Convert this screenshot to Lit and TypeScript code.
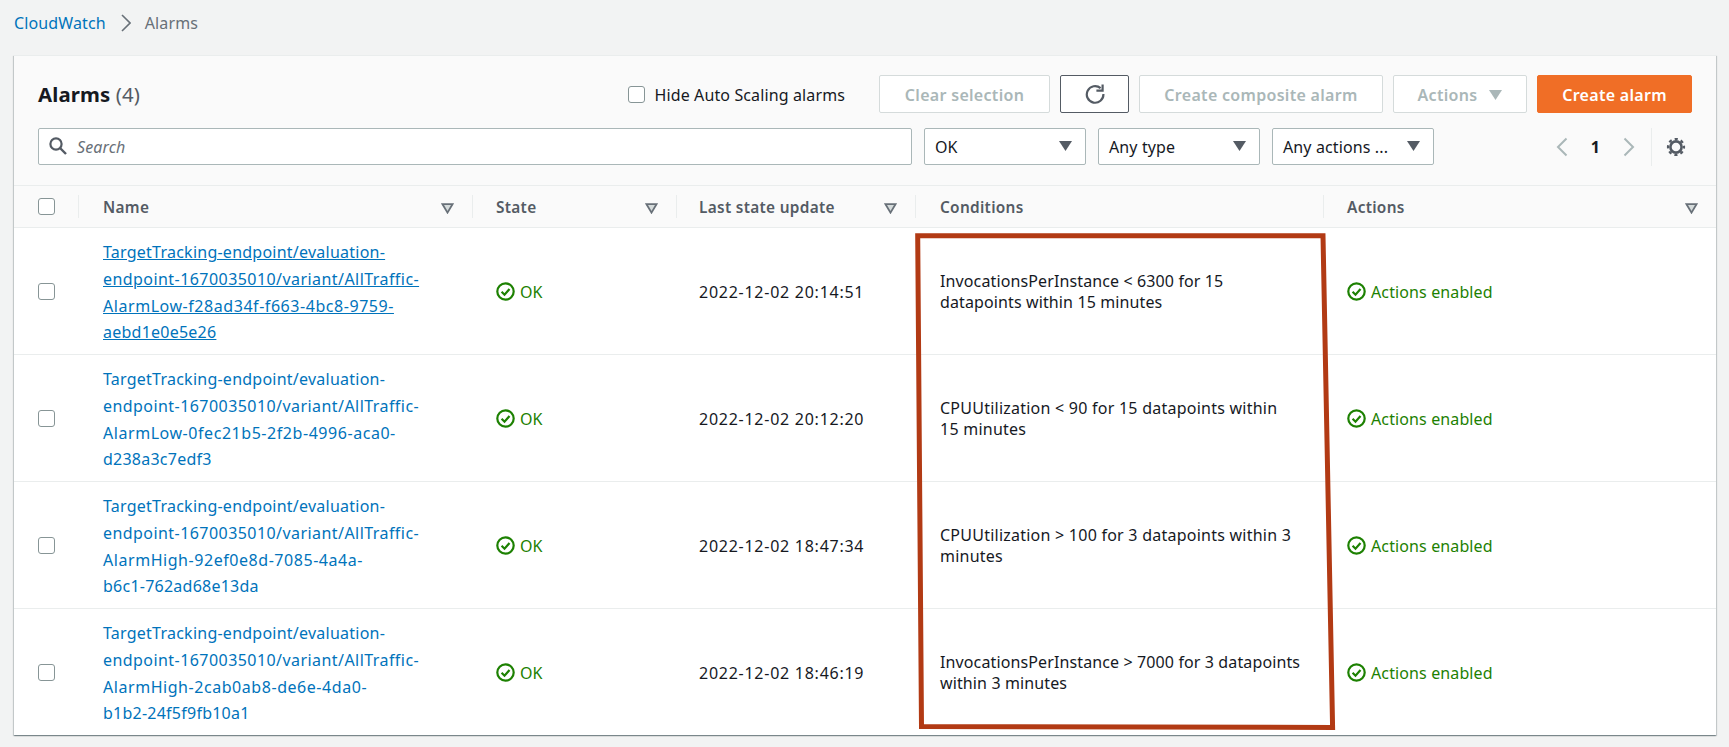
import { LitElement, html, css, svg } from 'lit';
import { customElement } from 'lit/decorators.js';

const rows = [
  {
    name: ['TargetTracking-endpoint/evaluation-', 'endpoint-1670035010/variant/AllTraffic-', 'AlarmLow-f28ad34f-f663-4bc8-9759-', 'aebd1e0e5e26'],
    updated: '2022-12-02 20:14:51',
    cond: ['InvocationsPerInstance < 6300 for 15', 'datapoints within 15 minutes'],
    hover: true,
  },
  {
    name: ['TargetTracking-endpoint/evaluation-', 'endpoint-1670035010/variant/AllTraffic-', 'AlarmLow-0fec21b5-2f2b-4996-aca0-', 'd238a3c7edf3'],
    updated: '2022-12-02 20:12:20',
    cond: ['CPUUtilization < 90 for 15 datapoints within', '15 minutes'],
    wide: true,
  },
  {
    name: ['TargetTracking-endpoint/evaluation-', 'endpoint-1670035010/variant/AllTraffic-', 'AlarmHigh-92ef0e8d-7085-4a4a-', 'b6c1-762ad68e13da'],
    updated: '2022-12-02 18:47:34',
    cond: ['CPUUtilization > 100 for 3 datapoints within 3', 'minutes'],
    wide: true,
  },
  {
    name: ['TargetTracking-endpoint/evaluation-', 'endpoint-1670035010/variant/AllTraffic-', 'AlarmHigh-2cab0ab8-de6e-4da0-', 'b1b2-24f5f9fb10a1'],
    updated: '2022-12-02 18:46:19',
    cond: ['InvocationsPerInstance > 7000 for 3 datapoints', 'within 3 minutes'],
  },
];

const okIcon = svg`<svg class="ok-icon" viewBox="0 0 19 19" width="19" height="19">
  <circle cx="9.5" cy="9.5" r="8.2" fill="none" stroke="#1d8102" stroke-width="2.2"/>
  <path d="M5.6 9.8l2.9 2.9 5-5.6" fill="none" stroke="#1d8102" stroke-width="2.2"/>
</svg>`;

const sortIcon = svg`<svg class="sort" viewBox="0 0 13 11" width="13" height="11">
  <path d="M1.5 1.2h10L6.5 9.6z" fill="#d5dbdb" stroke="#687078" stroke-width="1.8"/>
</svg>`;

const caret = (color: string) => svg`<svg viewBox="0 0 13 10" width="13" height="10">
  <path d="M0 0h13L6.5 10z" fill="${color}"/>
</svg>`;

@customElement('app-root')
export class AppRoot extends LitElement {
  static styles = css`
    :host {
      display: block;
      position: relative;
      height: 747px;
      overflow: hidden;
      background: #f2f3f3;
      color: #16191f;
      font-family: 'Noto Sans', sans-serif;
      font-size: 16px;
      letter-spacing: 0.12px;
    }
    .crumbs {
      display: flex;
      align-items: center;
      height: 46px;
      padding-left: 14px;
      color: #687078;
    }
    .crumbs a { color: #0073bb; }
    .crumbs svg { margin: 0 14px 0 15px; }
    .card {
      margin: 9px 13px 0 14px;
      background: #fff;
      box-shadow: 0 1px 1px 0 rgba(0, 28, 36, 0.3), 1px 1px 1px 0 rgba(0, 28, 36, 0.15), -1px 1px 1px 0 rgba(0, 28, 36, 0.15);
      border-top: 1px solid #eaeded;
    }
    .toolbar {
      background: #fafafa;
      padding: 19px 24px 20px;
      display: flex;
      flex-direction: column;
      gap: 15px;
      border-bottom: 1px solid #eaeded;
    }
    .title-row, .filter-row { display: flex; align-items: center; }
    .title-row { height: 38px; }
    .filter-row { height: 37px; }
    h1 {
      margin: 0;
      font-size: 20.4px;
      font-weight: 700;
      line-height: 38px;
    }
    h1 span { font-weight: 400; color: #545b64; }
    .hide-scaling {
      display: flex;
      align-items: center;
      gap: 9px;
      margin-left: auto;
      margin-right: 34px;
      padding-top: 1px;
    }
    .box {
      display: block;
      box-sizing: border-box;
      width: 17px;
      height: 17px;
      background: #fff;
      border: 1.5px solid #879596;
      border-radius: 3px;
    }
    .buttons { display: flex; gap: 10px; }
    .btn {
      box-sizing: border-box;
      height: 38px;
      display: flex;
      align-items: center;
      justify-content: center;
      gap: 12px;
      padding-top: 1px;
      background: #fff;
      border: 1px solid #d5dbdb;
      border-radius: 2px;
      color: #aab7b8;
      font-weight: 600;
      letter-spacing: 0.3px;
    }
    .clear { width: 171px; }
    .refresh { width: 69px; border-color: #545b64; padding-top: 0; }
    .composite { width: 244px; }
    .actions { width: 134px; }
    .create { width: 155px; background: #f06e26; border-color: #f06e26; color: #fff; }
    .search {
      box-sizing: border-box;
      width: 874px;
      height: 37px;
      display: flex;
      align-items: center;
      gap: 10px;
      padding-left: 10px;
      background: #fff;
      border: 1px solid #aab7b8;
      border-radius: 2px;
      color: #687078;
      font-style: italic;
    }
    .select {
      box-sizing: border-box;
      width: 162px;
      height: 37px;
      margin-left: 12px;
      display: flex;
      align-items: center;
      justify-content: space-between;
      padding: 0 13px 0 10px;
      background: #fff;
      border: 1px solid #aab7b8;
      border-radius: 2px;
    }
    .search, .select { padding-top: 1px; }
    .search svg, .select svg { margin-top: -2px; }
    .pager {
      display: flex;
      align-items: center;
      height: 38px;
      margin-left: auto;
    }
    .pager b { width: 55px; text-align: center; font-weight: 700; }
    .gear-wrap {
      display: flex;
      align-items: center;
      height: 38px;
      margin: 0 6px 0 16px;
      padding-left: 14px;
      border-left: 1px solid #eaeded;
    }
    .row {
      display: grid;
      grid-template-columns: 64px 394px 204px 239px 408px 1fr;
      border-bottom: 1px solid #eaeded;
    }
    .row:last-child { border-bottom: none; }
    .head {
      height: 41px;
      background: #fafafa;
      font-size: 15.4px;
      font-weight: 600;
      color: #545b64;
      letter-spacing: 0.3px;
    }
    .head > div {
      display: flex;
      align-items: center;
      justify-content: space-between;
      padding: 2px 18px 0 24px;
      position: relative;
    }
    .head > div + div::before {
      content: '';
      position: absolute;
      left: 0;
      top: 9px;
      bottom: 9px;
      width: 1px;
      background: #eaeded;
    }
    .sort { margin-top: 2px; }
    .body { height: 126px; }
    .body > div { display: flex; align-items: center; padding-left: 24px; }
    .head > .check, .body > .check { padding: 0 0 0 24px; }
    .head > .name-col, .body > .name-col { padding-left: 25px; }
    .head > .date-col { padding-left: 23px; }
    .body > .date-col { padding-left: 23px; padding-top: 1px; letter-spacing: 0.74px; }
    .head > .cond-col, .body > .cond-col { padding-left: 25px; }
    .links {
      display: block;
      padding-top: 3px;
      line-height: 26.6px;
      color: #0073bb;
      letter-spacing: 0.24px;
    }
    .links span { display: block; width: fit-content; }
    .links span:nth-child(2) { letter-spacing: 0.44px; }
    .links span:nth-child(3) { letter-spacing: 0.55px; }
    .hover span { text-decoration: underline; }
    .cond { line-height: 21px; display: block; padding-top: 2px; }
    .cond span { display: block; }
    .cond.wide { letter-spacing: 0.24px; }
    .body > .status { color: #1d8102; gap: 5px; padding-top: 1px; }
    .ok-icon { flex: none; margin-top: -1px; }
    .mark {
      position: absolute;
      left: 0;
      top: 0;
      pointer-events: none;
    }
  `;

  render() {
    return html`
      <nav class="crumbs">
        <a>CloudWatch</a>
        <svg viewBox="0 0 10 18" width="10" height="18"><path d="M1 1l8 8-8 8" fill="none" stroke="#687078" stroke-width="1.6"/></svg>
        <span>Alarms</span>
      </nav>
      <section class="card">
        <div class="toolbar">
          <div class="title-row">
            <h1>Alarms <span>(4)</span></h1>
            <label class="hide-scaling"><i class="box"></i>Hide Auto Scaling alarms</label>
            <div class="buttons">
              <div class="btn clear">Clear selection</div>
              <div class="btn refresh">
                <svg viewBox="0 0 20 20" width="20" height="20">
                  <path d="M15.6 4.2A8.3 8.3 0 1 0 18.4 10" fill="none" stroke="#545b64" stroke-width="2.2"/>
                  <path d="M17.6 0.5v6.2H11.4" fill="none" stroke="#545b64" stroke-width="2.2"/>
                </svg>
              </div>
              <div class="btn composite">Create composite alarm</div>
              <div class="btn actions">Actions ${caret('#aab7b8')}</div>
              <div class="btn create">Create alarm</div>
            </div>
          </div>
          <div class="filter-row">
            <div class="search">
              <svg viewBox="0 0 18 18" width="18" height="18">
                <circle cx="7" cy="7" r="5.6" fill="none" stroke="#545b64" stroke-width="2.2"/>
                <path d="M11 11l6 6" stroke="#545b64" stroke-width="2.4"/>
              </svg>
              Search
            </div>
            <div class="select">OK ${caret('#545b64')}</div>
            <div class="select">Any type ${caret('#545b64')}</div>
            <div class="select">Any actions ... ${caret('#545b64')}</div>
            <div class="pager">
              <svg viewBox="0 0 12 20" width="12" height="20"><path d="M10.5 1.5L2 10l8.5 8.5" fill="none" stroke="#aab7b8" stroke-width="2"/></svg>
              <b>1</b>
              <svg viewBox="0 0 12 20" width="12" height="20"><path d="M1.5 1.5L10 10l-8.5 8.5" fill="none" stroke="#aab7b8" stroke-width="2"/></svg>
              <div class="gear-wrap">
                <svg viewBox="0 0 20 20" width="20" height="20">
                  <circle cx="10" cy="10" r="5.6" fill="none" stroke="#545b64" stroke-width="2.6"/>
                  <circle cx="10" cy="10" r="8" fill="none" stroke="#545b64" stroke-width="2.2" stroke-dasharray="3.14 3.14" stroke-dashoffset="1.57"/>
                </svg>
              </div>
            </div>
          </div>
        </div>
        <div class="row head">
          <div class="check"><i class="box"></i></div>
          <div class="name-col">Name ${sortIcon}</div>
          <div>State ${sortIcon}</div>
          <div class="date-col">Last state update ${sortIcon}</div>
          <div class="cond-col">Conditions</div>
          <div>Actions ${sortIcon}</div>
        </div>
        ${rows.map(
          (r) => html`
            <div class="row body">
              <div class="check"><i class="box"></i></div>
              <div class="name-col"><a class="links ${r.hover ? 'hover' : ''}">${r.name.map((l) => html`<span>${l}</span>`)}</a></div>
              <div class="status">${okIcon}OK</div>
              <div class="date-col">${r.updated}</div>
              <div class="cond-col"><div class="cond ${r.wide ? 'wide' : ''}">${r.cond.map((l) => html`<span>${l}</span>`)}</div></div>
              <div class="status">${okIcon}Actions enabled</div>
            </div>
          `
        )}
      </section>
      <svg class="mark" width="1729" height="747" viewBox="0 0 1729 747">
        <path d="M917.7 235.8H1323L1332.6 727.5L921.5 726.5z" fill="none" stroke="#b23a14" stroke-width="5"/>
      </svg>
    `;
  }
}
